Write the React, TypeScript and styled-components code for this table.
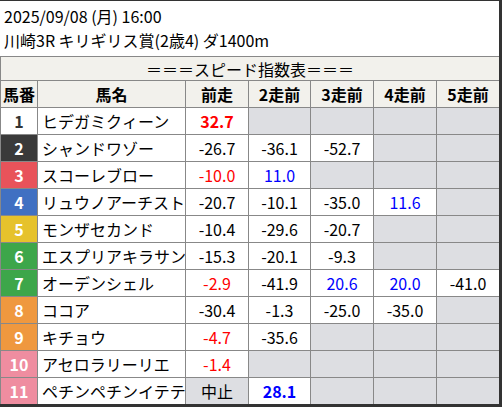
import React from 'react';
import styled, { createGlobalStyle } from 'styled-components';

const GlobalStyle = createGlobalStyle`
  html, body {
    margin: 0;
    padding: 0;
    background: #fff;
  }
  body {
    font-family: 'Noto Sans CJK JP', 'Noto Sans', sans-serif;
  }
`;

const Frame = styled.div`
  box-sizing: border-box;
  width: 502px;
  height: 407px;
  border-top: 1px solid #333;
  border-right: 3px solid #333;
  border-bottom: 3px solid #333;
  background: #fff;
  overflow: hidden;
`;

const RaceInfo = styled.div`
  padding: 3px 4px 1px 4px;
  font-size: 16px;
  line-height: 24px;
  color: #000;
  height: 51px;
  box-sizing: content-box;
`;

const Table = styled.table`
  border-collapse: collapse;
  table-layout: fixed;
  width: 499px;
  font-size: 16px;
`;

const Col = styled.col<{ $w: number }>`
  width: ${(p) => p.$w}px;
`;

const TitleCell = styled.th`
  background: #f2f1ec;
  font-weight: 400;
  height: 23px;
  padding: 0;
  border: 1px solid #888;
  text-align: center;
  line-height: 22px;
`;

const HeadCell = styled.th`
  background: #f2f1ec;
  font-weight: 700;
  height: 26px;
  padding: 0;
  border: 1px solid #888;
  text-align: center;
  white-space: nowrap;
`;

const NumCell = styled.td<{ $bg: string; $fg: string }>`
  background: ${(p) => p.$bg};
  color: ${(p) => p.$fg};
  font-weight: 700;
  text-align: center;
  height: 26px;
  padding: 0;
  border: 1px solid #888;
`;

const NameCell = styled.td`
  padding: 0 0 0 4px;
  border: 1px solid #888;
  white-space: nowrap;
  overflow: hidden;
  height: 26px;
  color: #000;
`;

const ValueCell = styled.td<{ $empty?: boolean; $color?: string; $bold?: boolean }>`
  background: ${(p) => (p.$empty ? '#dddee2' : '#fff')};
  color: ${(p) => p.$color || '#000'};
  font-weight: ${(p) => (p.$bold ? 700 : 400)};
  text-align: center;
  padding: 0;
  height: 26px;
  border: 1px solid #888;
`;

type Val = { v: string; c?: string; b?: boolean; grey?: boolean } | null;

const R = '#ff0000';
const B = '#0000ff';

const frames: Record<number, [string, string]> = {
  1: ['#ffffff', '#333333'],
  2: ['#3a3a3a', '#ffffff'],
  3: ['#e8535a', '#ffffff'],
  4: ['#4070c2', '#ffffff'],
  5: ['#e6c22c', '#ffffff'],
  6: ['#3da64a', '#ffffff'],
  7: ['#3da64a', '#ffffff'],
  8: ['#ef983f', '#ffffff'],
  9: ['#ef983f', '#ffffff'],
  10: ['#ef8da0', '#ffffff'],
  11: ['#ef8da0', '#ffffff'],
};

const rows: { no: number; name: string; vals: Val[] }[] = [
  { no: 1, name: 'ヒデガミクィーン', vals: [{ v: '32.7', c: R, b: true }, null, null, null, null] },
  { no: 2, name: 'シャンドワゾー', vals: [{ v: '-26.7' }, { v: '-36.1' }, { v: '-52.7' }, null, null] },
  { no: 3, name: 'スコーレブロー', vals: [{ v: '-10.0', c: R }, { v: '11.0', c: B }, null, null, null] },
  { no: 4, name: 'リュウノアーチスト', vals: [{ v: '-20.7' }, { v: '-10.1' }, { v: '-35.0' }, { v: '11.6', c: B }, null] },
  { no: 5, name: 'モンザセカンド', vals: [{ v: '-10.4' }, { v: '-29.6' }, { v: '-20.7' }, null, null] },
  { no: 6, name: 'エスプリアキラサン', vals: [{ v: '-15.3' }, { v: '-20.1' }, { v: '-9.3' }, null, null] },
  { no: 7, name: 'オーデンシェル', vals: [{ v: '-2.9', c: R }, { v: '-41.9' }, { v: '20.6', c: B }, { v: '20.0', c: B }, { v: '-41.0' }] },
  { no: 8, name: 'ココア', vals: [{ v: '-30.4' }, { v: '-1.3' }, { v: '-25.0' }, { v: '-35.0' }, null] },
  { no: 9, name: 'キチョウ', vals: [{ v: '-4.7', c: R }, { v: '-35.6' }, null, null, null] },
  { no: 10, name: 'アセロラリーリエ', vals: [{ v: '-1.4', c: R }, null, null, null, null] },
  { no: 11, name: 'ペチンペチンイテテ', vals: [{ v: '中止', grey: true }, { v: '28.1', c: B, b: true }, null, null, null] },
];

const heads = ['前走', '2走前', '3走前', '4走前', '5走前'];
const widths = [37, 148, 63, 62, 63, 63, 63];

const App = (): JSX.Element => (
  <>
    <GlobalStyle />
    <Frame>
      <RaceInfo>
        <div>2025/09/08 (月) 16:00</div>
        <div>川崎3R キリギリス賞(2歳4) ダ1400m</div>
      </RaceInfo>
      <Table>
        <colgroup>
          {widths.map((w, i) => (
            <Col key={i} $w={w} />
          ))}
        </colgroup>
        <thead>
          <tr>
            <TitleCell colSpan={7}>＝＝＝スピード指数表＝＝＝</TitleCell>
          </tr>
          <tr>
            <HeadCell>馬番</HeadCell>
            <HeadCell>馬名</HeadCell>
            {heads.map((h) => (
              <HeadCell key={h}>{h}</HeadCell>
            ))}
          </tr>
        </thead>
        <tbody>
          {rows.map((r) => (
            <tr key={r.no}>
              <NumCell $bg={frames[r.no][0]} $fg={frames[r.no][1]}>
                {r.no}
              </NumCell>
              <NameCell>{r.name}</NameCell>
              {r.vals.map((v, i) =>
                v ? (
                  <ValueCell key={i} $empty={v.grey} $color={v.c} $bold={v.b}>
                    {v.v}
                  </ValueCell>
                ) : (
                  <ValueCell key={i} $empty />
                )
              )}
            </tr>
          ))}
        </tbody>
      </Table>
    </Frame>
  </>
);

export default App;
